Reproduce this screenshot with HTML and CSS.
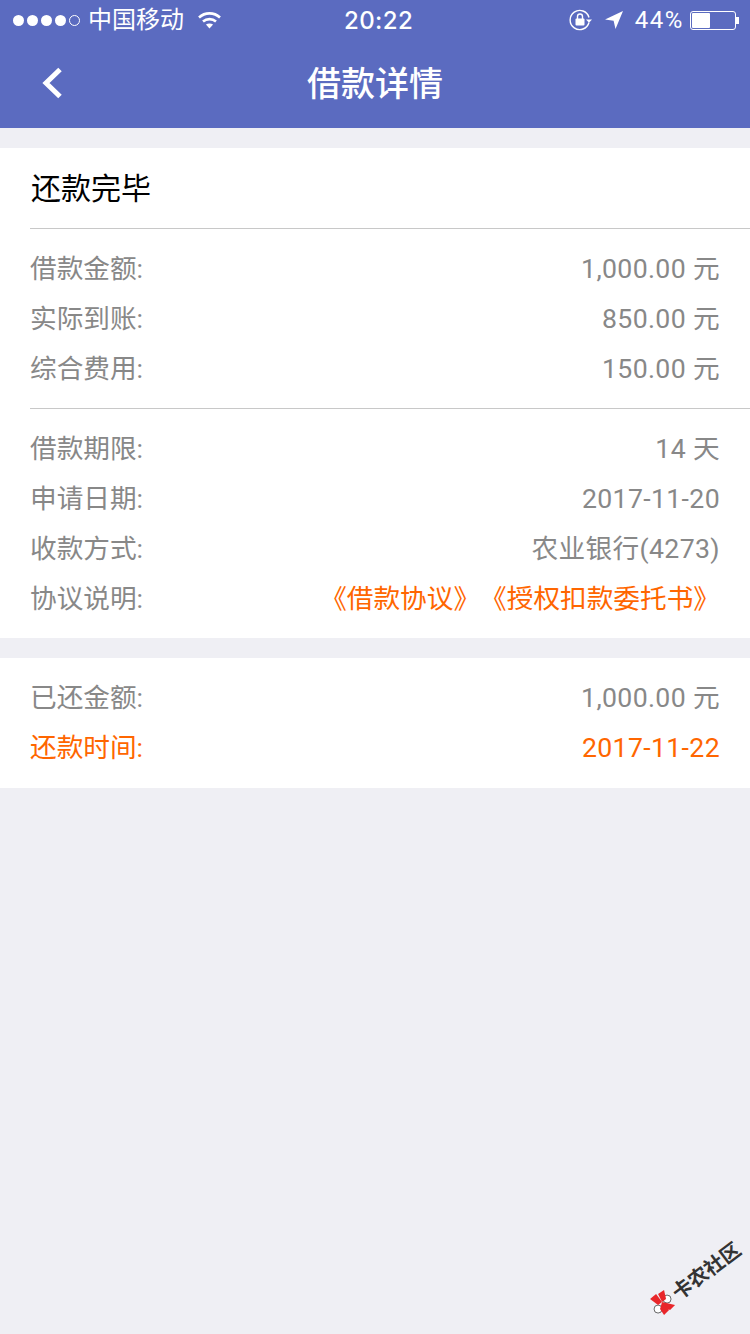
FILE: index.html
```html
<!DOCTYPE html>
<html lang="zh-CN">
<head>
    <meta charset="UTF-8">
    <meta name="viewport" content="width=device-width, initial-scale=1.0">
    <title>借款详情</title>
    <link rel="stylesheet" href="styles.css">
</head>
<body>
    <header class="top">
        <div class="status-bar">
            <div class="status-left">
                <span class="signal">
                    <i class="dot"></i><i class="dot"></i><i class="dot"></i><i class="dot"></i><i class="dot empty"></i>
                </span>
                <span class="carrier">中国移动</span>
                <svg class="wifi" width="25" height="18" viewBox="0 0 24 18" fill="none" stroke="#fff" stroke-width="2.6">
                    <path d="M1.5 6.5C7.5 1 16.5 1 22.5 6.5"></path>
                    <path d="M5.5 10.5C9.2 7.3 14.8 7.3 18.5 10.5"></path>
                    <path d="M12 17.5L8.4 13.6C10.5 12 13.5 12 15.6 13.6Z" fill="#fff" stroke="none"></path>
                </svg>
            </div>
            <div class="status-time">20:22</div>
            <div class="status-right">
                <svg class="lock" width="24" height="22" viewBox="0 0 24 22" fill="none" stroke="#fff" stroke-width="1.4">
                    <path d="M20 13.5A9.6 9.6 0 1 1 20 8.5"></path>
                    <path d="M17 10.5h6l-3 3.2z" fill="#fff" stroke="none"></path>
                    <rect x="6.5" y="9.5" width="9" height="7" rx="1" fill="#fff" stroke="none"></rect>
                    <path d="M8.5 10V7.5a2.5 2.5 0 0 1 5 0V10"></path>
                </svg>
                <svg class="arrow" width="20" height="20" viewBox="0 0 20 20">
                    <path d="M19 1L1 9.5l8.6 1.2L11.5 19z" fill="#fff"></path>
                </svg>
                <span class="percent">44%</span>
                <span class="battery"><i class="battery-fill"></i></span>
                <i class="battery-tip"></i>
            </div>
        </div>
        <div class="nav-bar">
            <svg class="back" width="22" height="32" viewBox="0 0 22 32" fill="none" stroke="#fff" stroke-width="5">
                <path d="M19 2.5L5 16l14 13.5"></path>
            </svg>
            <h1>借款详情</h1>
        </div>
    </header>

    <section class="card">
        <div class="card-title">还款完毕</div>
        <div class="group">
            <div class="row"><span>借款金额:</span><span class="value">1,000.00 元</span></div>
            <div class="row"><span>实际到账:</span><span class="value">850.00 元</span></div>
            <div class="row"><span>综合费用:</span><span class="value">150.00 元</span></div>
        </div>
        <div class="group">
            <div class="row"><span>借款期限:</span><span class="value">14 天</span></div>
            <div class="row"><span>申请日期:</span><span class="value">2017-11-20</span></div>
            <div class="row"><span>收款方式:</span><span class="value">农业银行(4273)</span></div>
            <div class="row"><span>协议说明:</span><span class="links">《借款协议》《授权扣款委托书》</span></div>
        </div>
    </section>

    <section class="card">
        <div class="group">
            <div class="row"><span>已还金额:</span><span class="value">1,000.00 元</span></div>
            <div class="row orange"><span>还款时间:</span><span class="value">2017-11-22</span></div>
        </div>
    </section>

    <div class="watermark">
        <svg width="28" height="28" viewBox="0 0 28 28">
            <g transform="translate(14 14) rotate(37)">
                <circle cx="5" cy="-3" r="4" fill="#fff" stroke="#444" stroke-width="0.8"></circle>
                <circle cx="-4" cy="7" r="4" fill="#fff" stroke="#444" stroke-width="0.8"></circle>
                <path d="M-12-3L-6-8 0 0-4 3z" fill="#e8262a"></path>
                <path d="M-4-8L2-12 4-3 0 0z" fill="#e8262a"></path>
                <path d="M0 0L13 3 8 8 3 6z" fill="#e8262a"></path>
                <path d="M0 0L3 3 7 8 2 13-2 7z" fill="#e8262a"></path>
            </g>
        </svg>
        <span>卡农社区</span>
    </div>
</body>
</html>
```

FILE: styles.css
```css
/* Reset and base styles */
* {
    margin: 0;
    padding: 0;
    box-sizing: border-box;
}
body {
    font-family: Roboto, "Noto Sans CJK SC", sans-serif;
    font-size: 26.67px;
    color: #888;
    background: #efeff4;
    min-height: 1334px;
    overflow: hidden;
    position: relative;
    text-spacing-trim: space-all;
}

/* Header styles */
.top {
    background: #5b6bc0;
    color: #fff;
    height: 128px;
}
.status-bar {
    height: 40px;
    display: flex;
    align-items: center;
    justify-content: space-between;
    padding: 0 11px 0 13px;
    position: relative;
}
.status-left,
.status-right {
    display: flex;
    align-items: center;
}
.signal {
    display: flex;
    gap: 3px;
}
.dot {
    width: 11px;
    height: 11px;
    border-radius: 50%;
    background: #fff;
}
.dot.empty {
    background: none;
    border: 1px solid #fff;
}
.carrier {
    font-size: 24px;
    line-height: 40px;
    margin-left: 8px;
}
.wifi {
    margin-left: 13px;
}
.status-time {
    position: absolute;
    left: 344px;
    font-size: 24px;
    font-family: "Inter", sans-serif;
    font-weight: 500;
    letter-spacing: 0.4px;
}
.lock {
    margin-right: 11px;
}
.arrow {
    margin-right: 11px;
}
.percent {
    font-size: 24px;
    letter-spacing: 1.6px;
    margin-right: 6px;
}
.battery {
    display: block;
    width: 46px;
    height: 19px;
    border: 1px solid #fff;
    border-radius: 3px;
    padding: 1px;
}
.battery-fill {
    display: block;
    width: 18px;
    height: 15px;
    background: #fff;
    border-radius: 1px;
}
.battery-tip {
    width: 3px;
    height: 7px;
    background: #fff;
}
.nav-bar {
    height: 88px;
    display: flex;
    align-items: center;
    justify-content: center;
    position: relative;
}
.nav-bar h1 {
    font-size: 34px;
    font-weight: 500;
    line-height: 88px;
}
.back {
    position: absolute;
    left: 41px;
    top: 27px;
}

/* Cards */
.card {
    background: #fff;
    margin-top: 20px;
    padding-left: 30px;
}
.card-title {
    height: 80px;
    line-height: 82px;
    padding-left: 1px;
    font-size: 30px;
    color: #000;
}
.group {
    padding: 15px 30px 14px 0;
    border-top: 1px solid #c8c8c8;
}
.card > .group:first-child {
    border-top: none;
    padding-bottom: 15px;
}
.row {
    height: 50px;
    line-height: 50px;
    display: flex;
    justify-content: space-between;
}
.value {
    letter-spacing: 0.35px;
}
.links {
    color: #ff6600;
}
.orange {
    color: #ff6600;
}

/* Watermark */
.watermark {
    position: absolute;
    left: 640px;
    top: 1264px;
    width: 108px;
    height: 28px;
    display: flex;
    align-items: center;
    transform: rotate(-37deg);
    color: #333;
    font-size: 20px;
    font-weight: 700;
    white-space: nowrap;
}
```
